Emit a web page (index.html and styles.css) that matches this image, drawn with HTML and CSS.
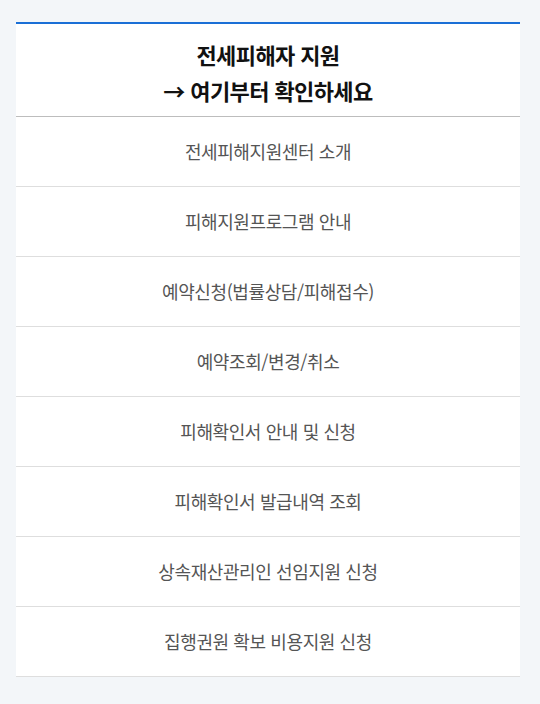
FILE: index.html
```html
<!DOCTYPE html>
<html lang="ko">
<head>
<meta charset="utf-8">
<link rel="stylesheet" href="styles.css">
</head>
<body>
<div class="card">
  <div class="head">전세피해자 지원<br>→ 여기부터 확인하세요</div>
  <ul class="list">
    <li>전세피해지원센터 소개</li>
    <li>피해지원프로그램 안내</li>
    <li>예약신청(법률상담/피해접수)</li>
    <li>예약조회/변경/취소</li>
    <li>피해확인서 안내 및 신청</li>
    <li>피해확인서 발급내역 조회</li>
    <li>상속재산관리인 선임지원 신청</li>
    <li>집행권원 확보 비용지원 신청</li>
  </ul>
</div>
</body>
</html>
```
FILE: styles.css
```css
html, body { margin: 0; padding: 0; }
body {
  background: #f3f6f9;
  font-family: "Noto Sans CJK KR", "Noto Sans", sans-serif;
  padding: 22px 20px 0 16px;
}
.card {
  width: 504px;
  background: #fff;
  border-top: 2px solid #1a6fd6;
}
.head {
  text-align: center;
  font-size: 22px;
  font-weight: 700;
  color: #111;
  line-height: 36px;
  padding: 12px 0 8px;
  letter-spacing: -0.6px;
  border-bottom: 1px solid #bdbdbd;
}
.list { list-style: none; margin: 0; padding: 0; }
.list li {
  height: 67px;
  padding-bottom: 2px;
  display: flex;
  align-items: center;
  justify-content: center;
  border-bottom: 1px solid #dedede;
  font-size: 18px;
  color: #555;
  letter-spacing: -0.4px;
}
```
